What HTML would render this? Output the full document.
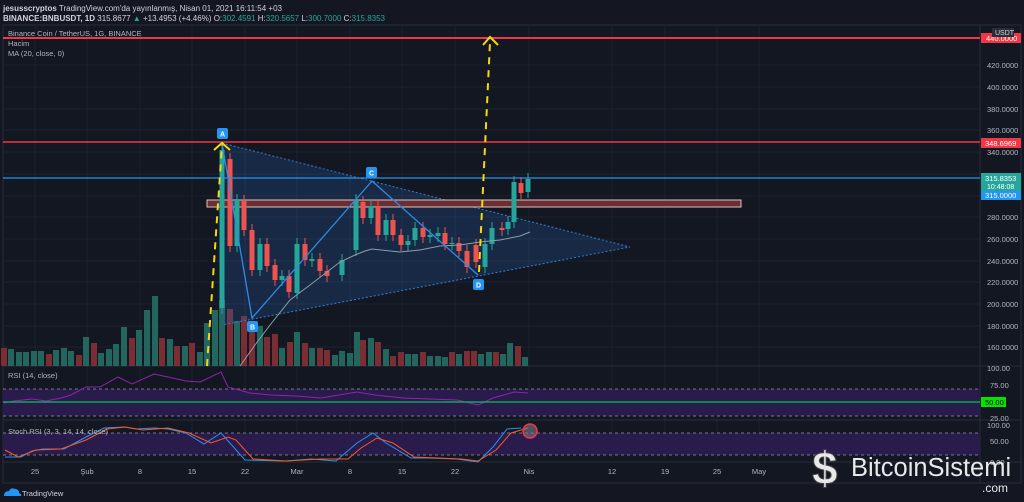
<!DOCTYPE html>
<html><head><meta charset="utf-8"><style>
body{margin:0;background:#141722;width:1024px;height:502px;overflow:hidden;font-family:"Liberation Sans",sans-serif}
svg{display:block}
</style></head><body>
<svg width="1024" height="502" viewBox="0 0 1024 502" xmlns="http://www.w3.org/2000/svg" font-family="Liberation Sans, sans-serif">
<rect width="1024" height="502" fill="#141722"/>
<rect x="3" y="25" width="1018" height="458" fill="#131722" stroke="#2a2e39"/>
<text x="3" y="11" font-size="8" fill="#d1d4dc"><tspan font-weight="bold">jesusscryptos</tspan> TradingView.com'da yayınlanmış, Nisan 01, 2021 16:11:54 +03</text>
<text x="3" y="21" font-size="8" fill="#d1d4dc"><tspan font-weight="bold">BINANCE:BNBUSDT, 1D</tspan> 315.8677 <tspan fill="#26a69a">▲</tspan> +13.4953 (+4.46%) O:<tspan fill="#26a69a">302.4591</tspan> H:<tspan fill="#26a69a">320.5657</tspan> L:<tspan fill="#26a69a">300.7000</tspan> C:<tspan fill="#26a69a">315.8353</tspan></text>
<g stroke="#1e2230" stroke-width="1">
<line x1="35" y1="25" x2="35" y2="458"/><line x1="87" y1="25" x2="87" y2="458"/><line x1="140" y1="25" x2="140" y2="458"/><line x1="192" y1="25" x2="192" y2="458"/><line x1="245" y1="25" x2="245" y2="458"/><line x1="297" y1="25" x2="297" y2="458"/><line x1="350" y1="25" x2="350" y2="458"/><line x1="402" y1="25" x2="402" y2="458"/><line x1="455" y1="25" x2="455" y2="458"/><line x1="529" y1="25" x2="529" y2="458"/><line x1="612" y1="25" x2="612" y2="458"/><line x1="665" y1="25" x2="665" y2="458"/><line x1="717" y1="25" x2="717" y2="458"/><line x1="759" y1="25" x2="759" y2="458"/>
<line x1="3" y1="65" x2="980" y2="65"/><line x1="3" y1="87" x2="980" y2="87"/><line x1="3" y1="109" x2="980" y2="109"/><line x1="3" y1="130" x2="980" y2="130"/><line x1="3" y1="152" x2="980" y2="152"/><line x1="3" y1="174" x2="980" y2="174"/><line x1="3" y1="196" x2="980" y2="196"/><line x1="3" y1="217" x2="980" y2="217"/><line x1="3" y1="239" x2="980" y2="239"/><line x1="3" y1="261" x2="980" y2="261"/><line x1="3" y1="282" x2="980" y2="282"/><line x1="3" y1="304" x2="980" y2="304"/><line x1="3" y1="326" x2="980" y2="326"/><line x1="3" y1="347" x2="980" y2="347"/>
</g>
<line x1="980" y1="25" x2="980" y2="483" stroke="#2a2e39"/>
<line x1="3" y1="366" x2="1021" y2="366" stroke="#2a2e39"/>
<line x1="3" y1="420" x2="1021" y2="420" stroke="#2a2e39"/>
<line x1="3" y1="462" x2="1021" y2="462" stroke="#2a2e39"/>
<g id="vol"></g>
<polygon points="222,143 630,247 222,325" fill="rgba(40,110,190,0.22)"/>
<polyline points="222,143 630,247 222,325" fill="none" stroke="#2f7fd6" stroke-dasharray="2,2"/>
<rect x="207" y="200" width="534" height="7" fill="#6b2e33" stroke="#d9c5c5" stroke-width="1"/>
<g id="cnd"></g>
<polyline points="240,366 255,345 270,325 290,300 310,285 340,262 355,255 365,251 372,249 400,252 420,250 440,246 460,245 480,242 500,240 520,236 530,232" fill="none" stroke="#8aa0a8" stroke-width="1"/>
<line x1="3" y1="38" x2="980" y2="38" stroke="#f23645" stroke-width="2"/>
<line x1="3" y1="142" x2="980" y2="142" stroke="#f23645" stroke-width="1.5"/>
<line x1="3" y1="178" x2="980" y2="178" stroke="#2196f3" stroke-width="1.2"/>
<polyline points="222,143 252,318 372,181 478,275" fill="none" stroke="#2f8ae6" stroke-width="1.3"/>
<g font-size="7" font-weight="bold" fill="#fff" text-anchor="middle">
<rect x="217" y="128" width="11" height="11" rx="2" fill="#2196f3"/><text x="222.5" y="136.5">A</text>
<rect x="247" y="321" width="11" height="11" rx="2" fill="#2196f3"/><text x="252.5" y="329.5">B</text>
<rect x="366" y="167" width="11" height="11" rx="2" fill="#2196f3"/><text x="371.5" y="175.5">C</text>
<rect x="473" y="279" width="11" height="11" rx="2" fill="#2196f3"/><text x="478.5" y="287.5">D</text>
</g>
<g stroke="#f5d90a" stroke-width="2" stroke-dasharray="7,6" fill="none">
<line x1="207" y1="366" x2="222" y2="145"/>
<line x1="479" y1="272" x2="490" y2="42"/>
</g>
<g stroke="#f5d90a" stroke-width="2" fill="none">
<polyline points="214,150 222,143 230,150"/>
<polyline points="483,45 490,37 498,45"/>
</g>
<text x="8" y="36" font-size="7.5" fill="#b2b5be">Binance Coin / TetherUS, 1G, BINANCE</text>
<text x="8" y="46" font-size="7.5" fill="#b2b5be">Hacim</text>
<text x="8" y="56" font-size="7.5" fill="#b2b5be">MA (20, close, 0)</text>
<g font-size="7.5" fill="#b2b5be">
<text x="987" y="68">420.0000</text><text x="987" y="90">400.0000</text><text x="987" y="112">380.0000</text><text x="987" y="133">360.0000</text><text x="987" y="155">340.0000</text><text x="987" y="220">280.0000</text><text x="987" y="242">260.0000</text><text x="987" y="264">240.0000</text><text x="987" y="285">220.0000</text><text x="987" y="307">200.0000</text><text x="987" y="329">180.0000</text><text x="987" y="350">160.0000</text>
</g>
<rect x="981" y="33" width="40" height="10" fill="#f23645"/><text x="986" y="41" font-size="7.5" fill="#fff">440.0000</text>
<rect x="992" y="28" width="22" height="9" fill="#2a2e39"/><text x="995" y="35" font-size="7" fill="#d1d4dc">USDT</text>
<rect x="981" y="138" width="40" height="10" fill="#f23645"/><text x="985" y="146" font-size="7.5" fill="#fff">348.6969</text>
<rect x="981" y="173" width="40" height="18" fill="#26a69a"/><text x="985" y="181" font-size="7.5" fill="#fff">315.8353</text><text x="987" y="189" font-size="7" fill="#fff">10:48:08</text>
<rect x="981" y="191" width="40" height="9" fill="#2196f3"/><text x="985" y="198" font-size="7.5" fill="#fff">315.0000</text>
<rect x="3" y="389" width="977" height="27" fill="#2a1b4d"/>
<line x1="3" y1="389" x2="980" y2="389" stroke="#9598a1" stroke-dasharray="3,3" stroke-width=".7"/>
<line x1="3" y1="416" x2="980" y2="416" stroke="#9598a1" stroke-dasharray="3,3" stroke-width=".7"/>
<polyline points="4,403 14,401 32,399 46,401 61,398 71,395 86,387 100,387 118,377 132,384 154,374 168,377 186,381 200,382 221,372 228,387 250,393 271,395 296,396 321,398 357,392 375,395 403,398 457,400 478,405 493,398 514,392 528,393" fill="none" stroke="#8e24aa" stroke-width="1"/>
<line x1="3" y1="402" x2="980" y2="402" stroke="#00c853" stroke-width="1.3"/>
<text x="8" y="378" font-size="7.5" fill="#b2b5be">RSI (14, close)</text>
<g font-size="7.5" fill="#b2b5be"><text x="987" y="371">100.00</text><text x="990" y="388">75.00</text><text x="990" y="421">25.00</text></g>
<rect x="981" y="397" width="25" height="10" fill="#00e600"/><text x="985" y="405" font-size="7.5" fill="#000">50.00</text>
<rect x="3" y="433" width="977" height="22" fill="#2a1b4d"/>
<line x1="3" y1="433" x2="980" y2="433" stroke="#9598a1" stroke-dasharray="3,3" stroke-width=".7"/>
<line x1="3" y1="455" x2="980" y2="455" stroke="#9598a1" stroke-dasharray="3,3" stroke-width=".7"/>
<polyline points="5,457 21,457 32,451 43,449 64,449 86,437 104,428 125,427 136,429 154,428 168,429 186,433 204,444 221,433 245,460 286,461 311,459 336,461 357,443 373,433 386,443 411,458 428,458 457,459 478,462 493,447 507,429 521,428" fill="none" stroke="#2196f3" stroke-width="1"/>
<polyline points="5,450 18,457 36,450 61,449 86,440 107,429 125,427 143,430 168,428 189,433 211,443 228,437 236,440 253,459 286,461 321,459 348,459 361,448 377,438 393,443 414,457 461,459 478,461 496,450 511,433 528,428" fill="none" stroke="#ff5722" stroke-width="1"/>
<circle cx="530" cy="431" r="7" fill="rgba(120,120,140,0.6)" stroke="#f23645" stroke-width="1.5"/>
<text x="8" y="434" font-size="7.5" fill="#b2b5be">Stoch RSI (3, 3, 14, 14, close)</text>
<g font-size="7.5" fill="#b2b5be"><text x="987" y="428">100.00</text><text x="990" y="444">50.00</text><text x="990" y="465">0.00</text></g>
<g font-size="7.5" fill="#b2b5be" text-anchor="middle">
<text x="35" y="474">25</text><text x="87" y="474">Şub</text><text x="140" y="474">8</text><text x="192" y="474">15</text><text x="245" y="474">22</text><text x="297" y="474">Mar</text><text x="350" y="474">8</text><text x="402" y="474">15</text><text x="455" y="474">22</text><text x="529" y="474">Nis</text><text x="612" y="474">12</text><text x="665" y="474">19</text><text x="717" y="474">25</text><text x="759" y="474">May</text>
</g>
<path d="M4 496 q0-5 5-5 q2-4 6-2 q4 0 4 4 q3 1 2 3z" fill="#2196f3"/>
<text x="22" y="496" font-size="7.5" fill="#d1d4dc">TradingView</text>
<g>
<text x="812" y="484" font-size="46" font-weight="bold" fill="#e8e8ea" stroke="#444" stroke-width="1">$</text>
<text x="851" y="476" font-size="25.5" fill="#e8e8ea">BitcoinSistemi</text>
<text x="982" y="492" font-size="12" fill="#e8e8ea">.com</text>
</g>
<script>
var ns="http://www.w3.org/2000/svg";
function el(g,t,a){var e=document.createElementNS(ns,t);for(var k in a)e.setAttribute(k,a[k]);g.appendChild(e);}
var V=[[4,18,1],[11,17,0],[19,14,0],[26,14,0],[34,15,0],[41,15,0],[49,12,1],[56,16,0],[64,18,0],[71,15,0],[79,11,1],[86,29,0],[94,23,1],[101,13,0],[109,17,0],[116,22,0],[124,39,0],[132,28,1],[139,36,0],[147,56,0],[155,70,0],[162,28,1],[170,27,0],[177,20,1],[185,20,0],[192,23,1],[200,14,0],[207,43,0],[215,56,0],[222,66,0],[230,57,1],[237,45,0],[244,50,1],[252,43,1],[260,40,0],[267,29,1],[275,32,1],[282,18,0],[290,24,1],[297,34,0],[305,23,1],[312,18,0],[320,18,1],[327,16,1],[335,11,0],[342,15,0],[350,13,0],[357,34,0],[363,26,1],[371,28,0],[378,24,1],[386,17,0],[393,10,1],[401,14,1],[408,12,0],[415,12,0],[423,14,1],[430,10,0],[438,10,0],[445,9,0],[452,14,1],[459,12,0],[467,15,1],[474,15,1],[481,12,0],[489,14,0],[496,14,1],[503,12,0],[510,23,0],[518,20,1],[525,9,0]];
var g=document.getElementById("vol");
V.forEach(function(v){el(g,"rect",{x:v[0]-3,y:366-v[1],width:6,height:v[1],fill:v[2]?"#7a2e33":"#22665e"});});
var C=[[222,150,308,0],[230,159,246,1],[237,200,246,0],[244,201,230,1],[252,230,270,1],[260,244,270,0],[267,244,266,1],[275,265,280,1],[282,276,280,0],[289,276,292,1],[297,244,293,0],[305,244,260,1],[312,259,261,0],[320,259,271,1],[327,271,276,1],[342,260,275,0],[356,200,250,0],[363,202,218,1],[371,206,218,0],[378,206,235,1],[386,220,235,0],[393,220,235,1],[401,235,245,1],[408,241,245,0],[415,228,240,0],[423,228,237,1],[430,235,237,0],[438,233,236,0],[445,233,244,1],[452,243,244,0],[459,243,251,1],[467,251,267,1],[476,245,262,1],[485,244,267,0],[492,228,244,0],[502,228,230,1],[508,222,229,0],[514,182,222,0],[521,183,193,1],[528,179,192,0]];
var h=document.getElementById("cnd");
C.forEach(function(c){var col=c[3]?"#ef5350":"#26a69a";el(h,"line",{x1:c[0],x2:c[0],y1:c[1]-6,y2:c[2]+6,stroke:col,"stroke-width":1});el(h,"rect",{x:c[0]-2.5,y:c[1],width:5,height:Math.max(1,c[2]-c[1]),fill:col});});
</script>
</svg>
</body></html>
